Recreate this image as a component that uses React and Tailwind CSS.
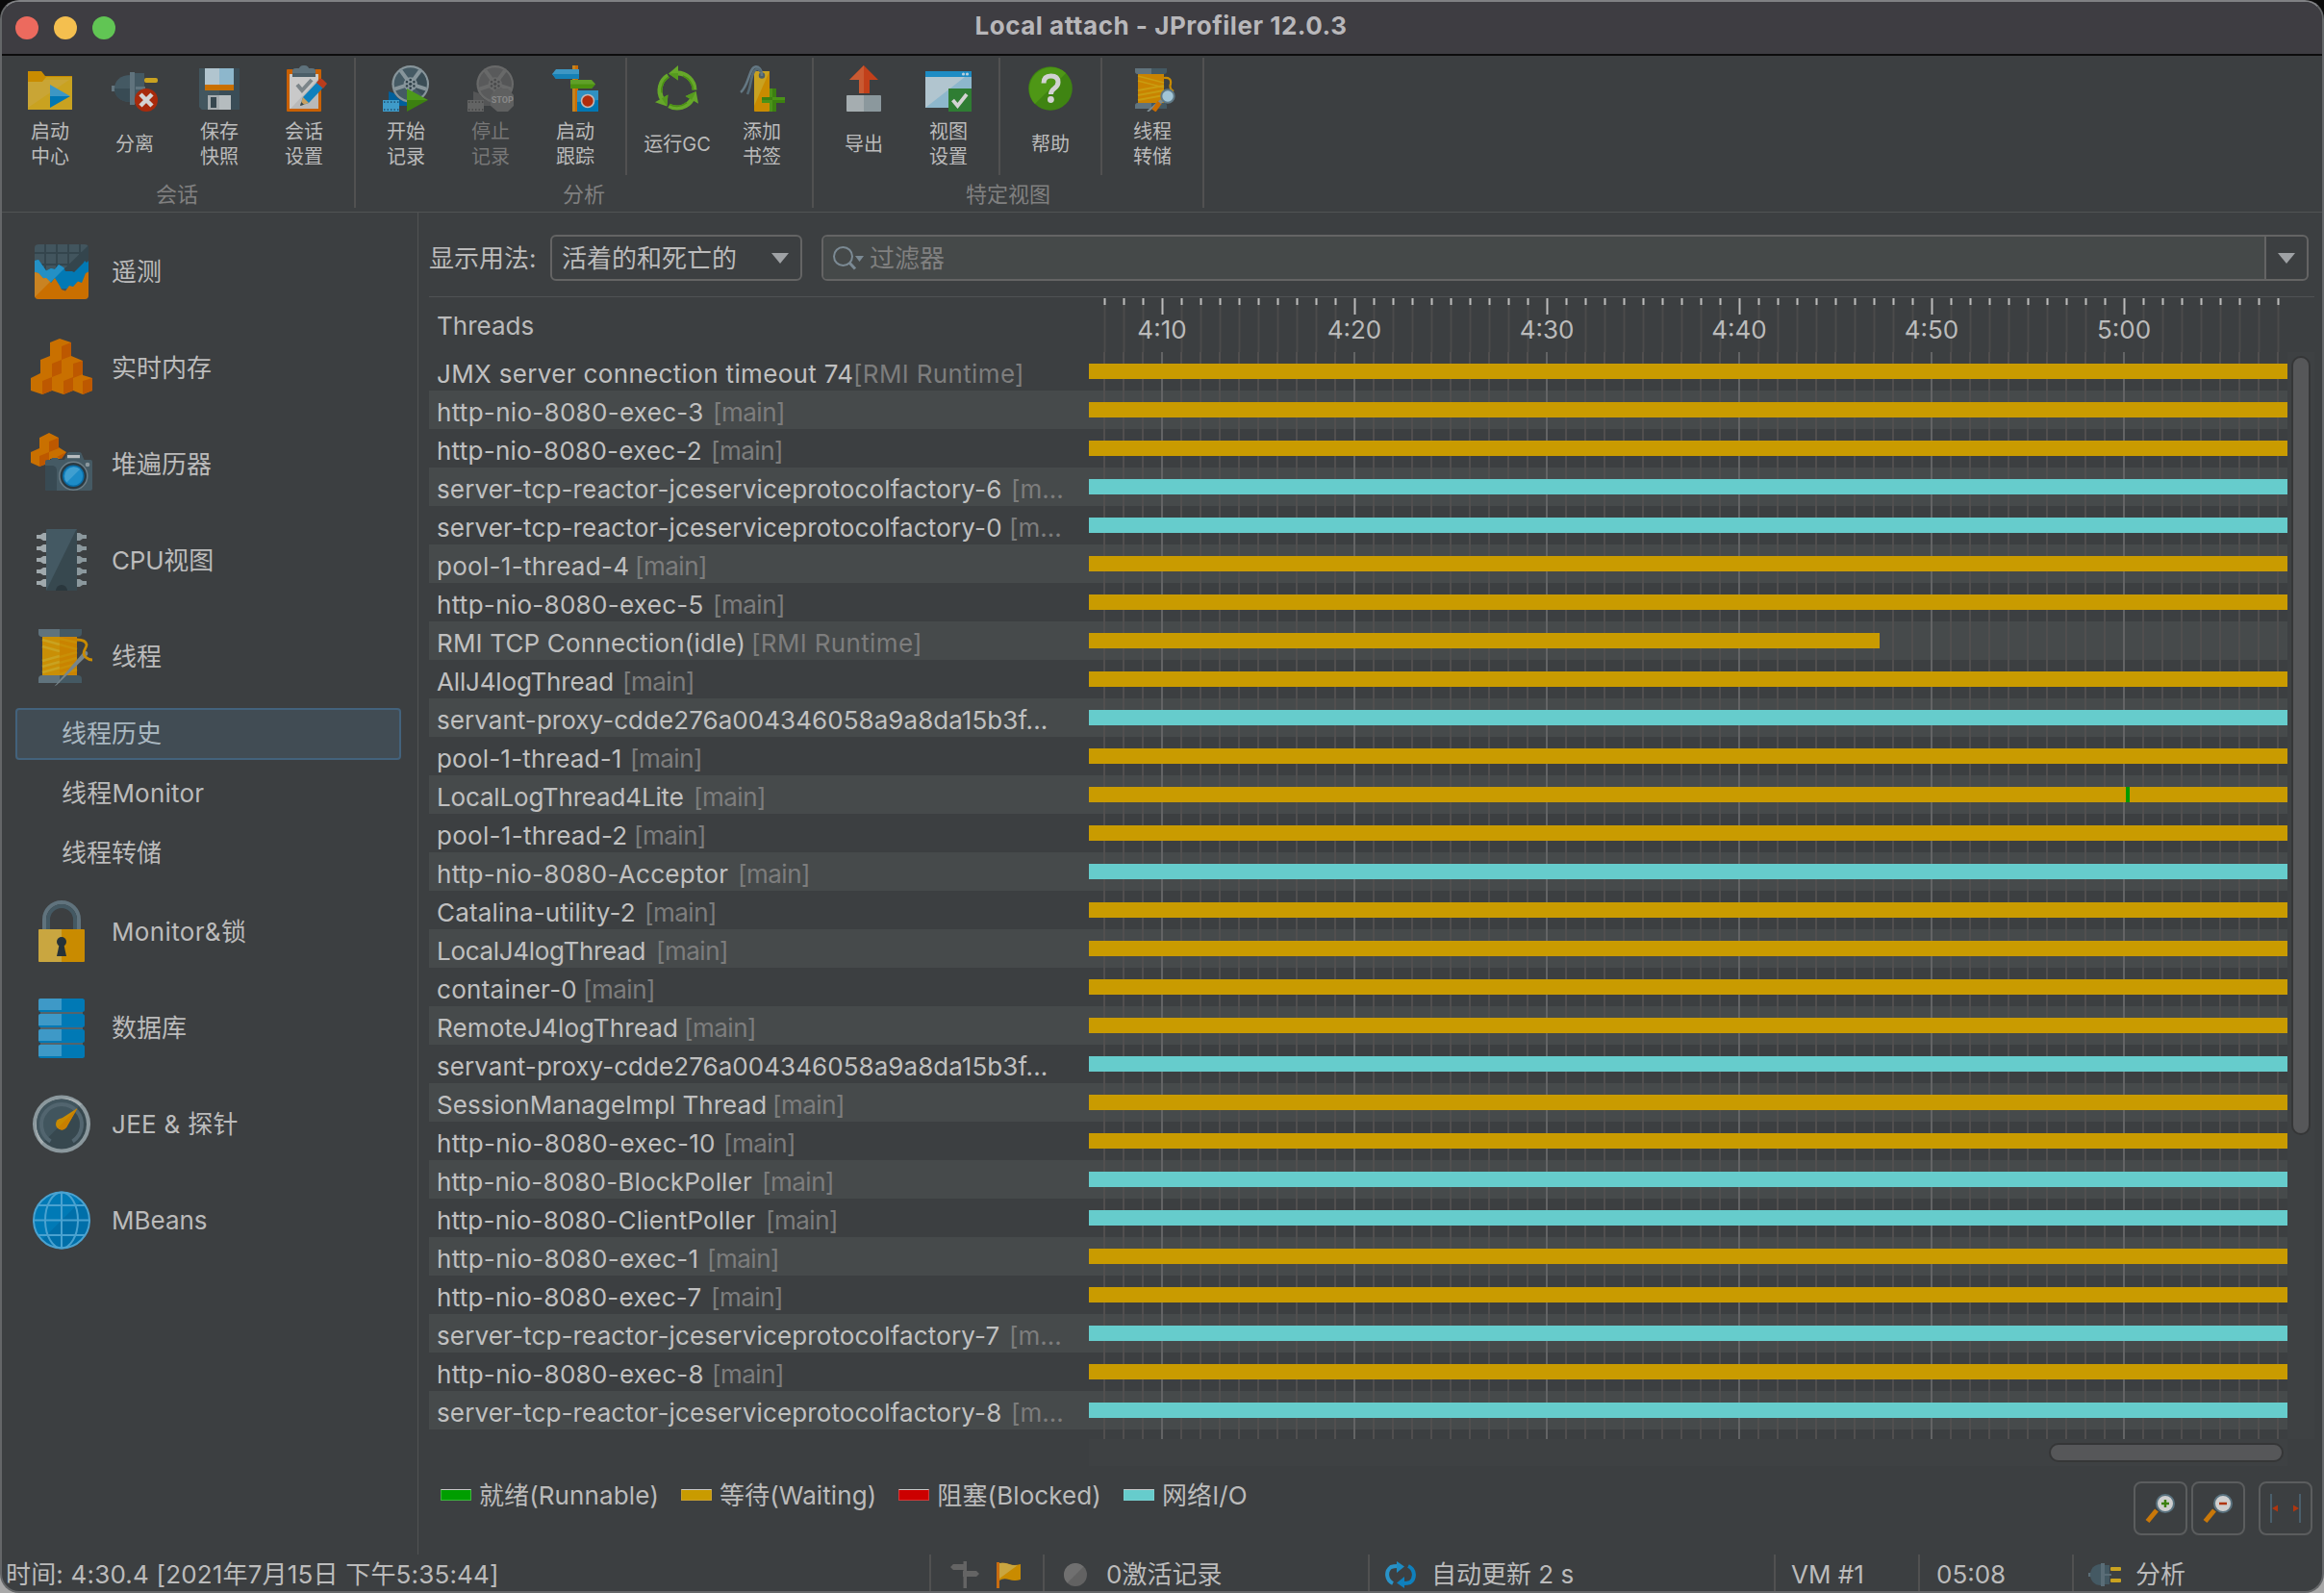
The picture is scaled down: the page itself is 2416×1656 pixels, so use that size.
import React from "react";

/* ---------- toolbar icons (48 x 48) ---------- */

const Icon48 = ({ children }) => (
  <svg width="48" height="48" viewBox="0 0 48 48" className="block shrink-0">
    {children}
  </svg>
);

const StartCenterIcon = () => (
  <Icon48>
    <path d="M1 6h14l4 5h28v35H1z" fill="#c98c00" />
    <path d="M1 17h15l4-5h27v34H1z" fill="#c9a220" />
    <path d="M1 17h15l2-2h26L1 44z" fill="#c9a535" />
    <path d="M24 20L45 32H24z" fill="#3d97c4" />
    <path d="M24 44L45 32H24z" fill="#0077b3" />
  </Icon48>
);

const DetachIcon = () => (
  <Icon48>
    <rect x="0" y="21" width="4" height="6" fill="#62747e" />
    <path d="M20 10C9 10 3 16 3 24s6 14 17 14z" fill="#445963" />
    <path d="M20 24H3c0 8 6 14 17 14z" fill="#384b54" />
    <rect x="24" y="8" width="10" height="32" fill="#445963" />
    <rect x="19" y="7" width="5" height="34" fill="#60737d" />
    <rect x="25" y="22" width="10" height="3" fill="#60737d" />
    <rect x="34" y="13" width="14" height="5" rx="2" fill="#c9a220" />
    <circle cx="36" cy="36" r="12" fill="#a82a0c" />
    <path d="M30 30l12 12M42 30L30 42" stroke="#d3d3d3" strokeWidth="4.5" />
  </Icon48>
);

const SaveIcon = () => (
  <Icon48>
    <path d="M3 3h42v43H6l-3-3z" fill="#3a4d57" />
    <path d="M3 3h21v43H6l-3-3z" fill="#42565f" />
    <rect x="9" y="3" width="15" height="17" fill="#b1c5cf" />
    <rect x="24" y="3" width="15" height="17" fill="#8db7cc" />
    <rect x="9" y="20" width="30" height="6" fill="#c97000" />
    <rect x="12" y="31" width="24" height="15" fill="#a6adb0" />
    <rect x="24" y="31" width="12" height="15" fill="#b5bcbf" />
    <rect x="15" y="33" width="6" height="11" fill="#37474f" />
  </Icon48>
);

const SessionSettingsIcon = () => (
  <Icon48>
    <rect x="6" y="4" width="36" height="44" rx="1" fill="#c96000" />
    <rect x="9" y="9" width="30" height="36" fill="#c9c9c9" />
    <path d="M39 14v31H10z" fill="#b9b9b9" />
    <path d="M12 12V6q0-3 4-3h3q1-3 5-3t5 3h3q4 0 4 3v6z" fill="#4b5e68" />
    <path d="M12 8V6q0-3 4-3h3q1-3 5-3t5 3h3q4 0 4 3v2z" fill="#5f727c" />
    <path d="M17 20l5 6 10-11" fill="none" stroke="#7c8589" strokeWidth="4" />
    <path d="M20 42l3-9 16-17 6 6-16 17z" fill="#0d80bd" />
    <path d="M20 42l3-9 6 6z" fill="#c9a060" />
    <path d="M20 42l1.300-4 2.700 2.700z" fill="#37474f" />
    <path d="M37 18l3-4q2-1 4 1l4 4-4 5z" fill="#b93c1c" />
  </Icon48>
);

const Reel = ({ rim, body, dark, hole }) => (
  <g>
    <circle cx="28.700" cy="19.300" r="19.300" fill={rim} />
    <circle cx="28.700" cy="19.300" r="17" fill={body} />
    <path d="M28.700 19.300L41 7.500A17 17 0 0 1 41 31z" fill={dark} />
    {[36, 108, 180, 252, 324].map((a) => (
      <rect key={a} x="26.700" y="2" width="4" height="13" fill={rim} transform={`rotate(${a} 28.7 19.3)`} />
    ))}
    <circle cx="28.700" cy="19.300" r="7" fill={rim} />
    <circle cx="28.700" cy="19.300" r="1.600" fill={hole} />
    {[0, 60, 120, 180, 240, 300].map((a) => (
      <circle key={a} cx="28.700" cy="15" r="1.300" fill={hole} transform={`rotate(${a} 28.7 19.3)`} />
    ))}
  </g>
);

const FilmStrip = ({ back, front, hole }) => (
  <g>
    <path d="M6 27l6 2q4 8 14 9v4H6z" fill={back} />
    <rect x="0" y="36" width="17" height="12" fill={front} />
    {[1, 4.5, 8, 11.5, 15].map((x) => (
      <g key={x} fill={hole}>
        <rect x={x} y="37.300" width="1.400" height="1.600" />
        <rect x={x} y="45.200" width="1.400" height="1.600" />
      </g>
    ))}
  </g>
);

const StartRecordingIcon = () => (
  <Icon48>
    <FilmStrip back="#005f9a" front="#3f9bc9" hole="#1f4f70" />
    <Reel rim="#87959b" body="#455a64" dark="#3a4d56" hole="#2f4049" />
    <path d="M25 24l22 12H25z" fill="#4d9a1a" />
    <path d="M25 48l22-12H25z" fill="#3c8010" />
  </Icon48>
);

const StopRecordingIcon = () => (
  <Icon48>
    <FilmStrip back="#555657" front="#636464" hole="#444" />
    <Reel rim="#686969" body="#595a5b" dark="#555657" hole="#4a4b4c" />
    <path d="M31 24h11l6 7v11l-6 6H31l-7-6V31z" fill="#5f6060" />
    <text x="36.200" y="39.300" textAnchor="middle" fontFamily="Roboto, sans-serif" fontSize="9" fontWeight="700" fill="#888888">
      STOP
    </text>
  </Icon48>
);

const TrackingIcon = () => (
  <Icon48>
    <rect x="21" y="0" width="6" height="48" fill="#c4831e" />
    <rect x="24" y="0" width="3" height="48" fill="#c96c00" />
    <path d="M0 9l4-5h24v10H4z" fill="#3d97c4" />
    <path d="M0 9l4 5h24V9z" fill="#1580b5" />
    <path d="M45 19.500L41 15H19v9h22z" fill="#60a028" />
    <path d="M45 19.500L41 24H19v-4.500z" fill="#4b9010" />
    <rect x="26" y="26" width="22" height="22" fill="#0077b3" />
    <path d="M26 26h22v10L26 38z" fill="#3091c1" />
    <circle cx="37" cy="37" r="6.500" fill="#b02c0d" stroke="#c3b8b5" strokeWidth="1.600" />
  </Icon48>
);

const RunGcIcon = () => (
  <Icon48>
    {[0, 120, 240].map((a) => (
      <g key={a} transform={`rotate(${a} 24 26)`}>
        <path d="M42 25.500A18 18 0 0 0 24 8" fill="none" stroke="#66a82a" strokeWidth="5" />
        <path d="M40.500 25.500A16.500 16.500 0 0 0 30 11" fill="none" stroke="#4a8f14" strokeWidth="1.600" />
        <path d="M25 0L15 8.500 25 15.500z" fill="#66a82a" />
        <path d="M25 8L15 8.500 25 15.500z" fill="#559a1e" />
      </g>
    ))}
  </Icon48>
);

const BookmarkIcon = () => (
  <Icon48>
    <rect x="16" y="6" width="16" height="42" rx="1" fill="#c98b00" />
    <path d="M16 6h16L16 42z" fill="#c9a220" />
    <circle cx="24" cy="10.500" r="3.200" fill="#4b5e68" />
    <path d="M24 11C24 3 20 1 17 1.500C11 2.500 10 22 2 28" fill="none" stroke="#647884" strokeWidth="2.600" />
    <path d="M23 7C21 3 18 3 16 6C12 13 13 22 9 30" fill="none" stroke="#566a75" strokeWidth="2.600" />
    <path d="M32 24h7v9h9v6h-9v9h-7v-9h-8v-6h8z" fill="#3c8010" />
    <path d="M32 24h3v24h-3v-9h-8v-3h24v-3H32z" fill="#4b9318" />
  </Icon48>
);

const ExportIcon = () => (
  <Icon48>
    <path d="M24 0L9 15h10v14h11V15h9z" fill="#c2401a" />
    <path d="M24 0L9 15h10v14h5z" fill="#c95a32" />
    <rect x="6" y="31" width="36" height="17" rx="1" fill="#8b989d" />
    <path d="M7 31h17v17H7l-1-1V32z" fill="#a5adb0" />
  </Icon48>
);

const ViewSettingsIcon = () => (
  <Icon48>
    <rect x="0" y="6" width="48" height="38" fill="#8db7cc" />
    <path d="M0 12h41L0 44z" fill="#b1c5cf" />
    <rect x="0" y="6" width="48" height="6" fill="#1d8cc4" />
    <circle cx="39.500" cy="9" r="1.600" fill="#b8cfda" />
    <circle cx="43.500" cy="9" r="1.600" fill="#b8cfda" />
    <rect x="24" y="24" width="24" height="24" fill="#2f7d33" />
    <path d="M28.500 36l5 6 9.500-12" fill="none" stroke="#d3d3d3" strokeWidth="3.800" />
  </Icon48>
);

const HelpIcon = () => (
  <Icon48>
    <circle cx="24" cy="24" r="22.800" fill="#3f8412" />
    <path d="M7.900 40.100A22.800 22.800 0 0 1 40.100 7.900z" fill="#4e9716" />
    <path d="M17 18.500q0-7.500 7.500-7.500t7.500 6.500q0 3.500-4 6.500-3.500 2.500-3.500 6" fill="none" stroke="#d2d2d2" strokeWidth="5" />
    <circle cx="24.400" cy="35.500" r="3.400" fill="#d2d2d2" />
  </Icon48>
);

const ThreadDumpIcon = () => (
  <Icon48>
    <path d="M6 3h33v3q0 3-3 3H9q-3 0-3-3z" fill="#445963" />
    <path d="M6 3h17v6H9q-3 0-3-3z" fill="#60737d" />
    <rect x="9" y="9" width="27" height="30" fill="#c98300" />
    <path d="M9 11l27 7M9 16l27 7M9 26l27-5M9 31l27-5M9 36l27-5" stroke="#c99c10" strokeWidth="1.800" />
    <path d="M6 45v-3q0-3 3-3h27q3 0 3 3v3z" fill="#445963" />
    <path d="M6 45v-3q0-3 3-3h14v6z" fill="#60737d" />
    <path d="M36 13q8-1 7 6-2 5 3 8" fill="none" stroke="#c98b00" strokeWidth="2.200" />
    <path d="M19 48L33 36" stroke="#7e8c92" strokeWidth="2" />
    <path d="M25.500 47l6-8.500" stroke="#c96c00" strokeWidth="5" />
    <path d="M32 39l4-3" stroke="#7e8c92" strokeWidth="2.500" />
    <circle cx="40" cy="32" r="6.700" fill="#a2c5d6" stroke="#5f7885" strokeWidth="2" />
  </Icon48>
);

/* ---------- sidebar icons (64 x 64) ---------- */

const Icon64 = ({ children }) => (
  <svg width="64" height="64" viewBox="0 0 64 64" className="block shrink-0">
    {children}
  </svg>
);

const TelemetryIcon = () => (
  <Icon64>
    <rect x="4" y="4" width="56" height="57" rx="4" fill="#42555e" />
    <path d="M60 5v35H24z" fill="#34454d" />
    <path d="M15 4v30M27 4v30M39 4v30M51 4v30M4 13h56M4 25h56" stroke="#34454d" strokeWidth="2" />
    <path
      d="M4 21l4-1 8 11.500 5-2.500 4 1 4-5 5 3 2 4h7l2 1 10-10 1-2 2 2 2-2V50H4z"
      fill="#0279b4"
    />
    <path d="M4 21l4-1 8 11.500 5-2.500 4 1 4-5 5 3 1 1-16 16H4z" fill="#2490c5" />
    <path
      d="M4 33l4 1 5 5.500 3-.500 5 5 4-5 5 8 2 4 4 1.500 4-5.500 4 1 5-5.500 4 1.500 4-10 3-1.500V57q0 4-4 4H8q-4 0-4-4z"
      fill="#c96f00"
    />
    <path d="M4 33l4 1 5 5.500 3-.500 4 4-16 16z" fill="#c98322" />
  </Icon64>
);

const LiveMemoryIcon = () => (
  <Icon64>
    <path
      d="M20 6L30 2 42 6V20L54 25V40L64 43V56L54 60 44 56 34 60 22 56 12 60 0 56V43L10 38V24L20 20Z"
      fill="#c97000"
    />
    <path
      d="M32 10L42 6V20L32 24zM22 28L32 24V38L22 42zM44 28L54 25V39L44 43zM12 46L22 42V56L12 60zM34 46L44 42V56L34 60zM54 46L64 43V56L54 60z"
      fill="#bd5800"
    />
  </Icon64>
);

const HeapWalkerIcon = () => (
  <Icon64>
    <path d="M9 5L19 0 29 5V15L37 20 30 27 20 27V31L9 35 0 31V20L9 16Z" fill="#c97000" />
    <path d="M19 9L29 5V16L19 20zM9 24L19 20V31L9 35zM27 25L37 20 32 27z" fill="#bd5800" />
    <path d="M17 28h4l1-2h6l1 2h6l3-7q.500-1 2-1h10q2 0 2.500 1l3 7H62q2 0 2 2v28q0 2-2 2H17q-2 0-2-2V30q0-2 2-2z" fill="#455a64" />
    <path d="M15 34h8q4 1 4 5v21H17q-2 0-2-2z" fill="#384a53" />
    <rect x="38" y="23" width="13" height="3.200" fill="#b7bcbf" />
    <circle cx="59" cy="33" r="2.300" fill="#8a979d" />
    <circle cx="44.300" cy="44.700" r="14.500" fill="#2a3a42" stroke="#6d7e87" strokeWidth="1.500" />
    <circle cx="44.300" cy="44.700" r="11.300" fill="#0a6ea8" />
    <circle cx="44.300" cy="44.700" r="9.800" fill="#1d8cc7" />
    <path d="M37.400 51.600A9.800 9.800 0 0 1 51.200 37.800z" fill="#3f9fd0" />
  </Icon64>
);

const CpuIcon = () => (
  <Icon64>
    {[8, 20, 32, 44, 56].map((y) => (
      <g key={y} transform={`translate(0 ${y})`}>
        <path d="M6-2h4l3-2h3v8h-3l-3-2H6z" fill="#a0a9ad" />
        <path d="M58-2h-4l-3-2h-3v8h3l3-2h4z" fill="#8b989d" />
      </g>
    ))}
    <rect x="16" y="0" width="32" height="64" rx="1" fill="#445963" />
    <path d="M47 1h1v63H16z" fill="#37484f" />
    <path d="M26 64a6 6 0 0 1 12 0z" fill="#2a373d" />
  </Icon64>
);

const ThreadsIcon = () => (
  <Icon64>
    <path d="M8 4h45v4q0 4-4 4H12q-4 0-4-4z" fill="#445963" />
    <path d="M8 4h22v8H12q-4 0-4-4z" fill="#60737d" />
    <rect x="12" y="12" width="36" height="40" fill="#c98300" />
    <rect x="12" y="12" width="18" height="40" fill="#c98f06" />
    <g fill="none" strokeWidth="2.600">
      <path d="M12 15l18 5M12 22l18 5M12 37l18-5M12 43l18-5M12 49l18-5" stroke="#c9a220" />
      <path d="M30 14l18 4M30 20l18 5M30 33l18-5M30 39l18-5M30 45l18-5M30 51l18-5" stroke="#c98f06" />
    </g>
    <path d="M8 60v-4q0-4 4-4h37q4 0 4 4v4z" fill="#445963" />
    <path d="M8 60v-4q0-4 4-4h18v8z" fill="#60737d" />
    <path d="M24.500 63.500L53 30q3-4 5-3t1 4L27 62z" fill="#77858b" />
    <path d="M48 15q9 0 10 5c0 4-3 5-3 9 0 3 4 7 9 7" fill="none" stroke="#c98b00" strokeWidth="2.800" />
  </Icon64>
);

const LockIcon = () => (
  <Icon64>
    <path d="M14 31V20a18 18 0 0 1 36 0v11" fill="none" stroke="#60737d" strokeWidth="4" />
    <path d="M18 31V20a14 14 0 0 1 28 0v11" fill="none" stroke="#445963" strokeWidth="4" />
    <rect x="8" y="30" width="48" height="34" rx="1" fill="#c98b00" />
    <path d="M9 30h23v34H9l-1-1V31z" fill="#c9a640" />
    <circle cx="32" cy="43" r="5" fill="#263238" />
    <path d="M30 44h4l3 14H27z" fill="#263238" />
  </Icon64>
);

const DatabaseIcon = () => (
  <Icon64>
    <rect x="10" y="10" width="44" height="50" fill="#54646c" />
    {[2, 18, 34, 50].map((y) => (
      <g key={y}>
        <rect x="8" y={y} width="48" height="14" rx="2.500" fill="#0079b5" />
        <path transform={`translate(0 ${y})`} d="M10 0h22v12H8V2q0-2 2-2z" fill="#3e99c7" />
      </g>
    ))}
  </Icon64>
);

const GaugeIcon = () => (
  <Icon64>
    <circle cx="32" cy="32.500" r="30" fill="#8b989d" />
    <path d="M11 53.500A30 30 0 0 1 53 11.500z" fill="#a4adb0" />
    <circle cx="32" cy="32.500" r="26" fill="#37484f" />
    <path d="M13.600 50.900A26 26 0 0 1 50.400 14.100z" fill="#41555e" />
    <path d="M20.500 50.500A21 21 0 1 1 43.500 50.500" fill="none" stroke="#52656f" strokeWidth="4" />
    <path d="M29 28.500L48.500 16 37 36z" fill="#c98b00" />
    <circle cx="32" cy="32.500" r="6" fill="#c98b00" />
    <path d="M28 36.500L48.500 16 37 36q-4 5-9 .500z" fill="#c97f00" />
  </Icon64>
);

const GlobeIcon = () => (
  <Icon64>
    <circle cx="32" cy="32.500" r="29" fill="#006fa9" />
    <path d="M11.500 53A29 29 0 0 1 52.500 12z" fill="#007ab6" />
    <g fill="none" stroke="#4aa2d0" strokeWidth="2">
      <circle cx="32" cy="32.500" r="29" />
      <ellipse cx="32" cy="32.500" rx="17" ry="29" />
      <path d="M32 3v59M3 32.500h58M7 17h50M7 48h50" />
    </g>
  </Icon64>
);

/* ---------- data ---------- */

const toolbarGroups = [
  {
    label: "会话",
    sections: [
      [
        { lines: ["启动", "中心"], Icon: StartCenterIcon },
        { lines: ["分离"], Icon: DetachIcon },
        { lines: ["保存", "快照"], Icon: SaveIcon },
        { lines: ["会话", "设置"], Icon: SessionSettingsIcon },
      ],
    ],
  },
  {
    label: "分析",
    sections: [
      [
        { lines: ["开始", "记录"], Icon: StartRecordingIcon },
        { lines: ["停止", "记录"], Icon: StopRecordingIcon, disabled: true },
        { lines: ["启动", "跟踪"], Icon: TrackingIcon },
      ],
      [
        { lines: ["运行GC"], Icon: RunGcIcon },
        { lines: ["添加", "书签"], Icon: BookmarkIcon },
      ],
    ],
  },
  {
    label: "特定视图",
    sections: [
      [
        { lines: ["导出"], Icon: ExportIcon },
        { lines: ["视图", "设置"], Icon: ViewSettingsIcon },
      ],
      [{ lines: ["帮助"], Icon: HelpIcon }],
      [{ lines: ["线程", "转储"], Icon: ThreadDumpIcon }],
    ],
  },
];

const navTop = [
  ["遥测", TelemetryIcon],
  ["实时内存", LiveMemoryIcon],
  ["堆遍历器", HeapWalkerIcon],
  ["CPU视图", CpuIcon, "tracking-[-0.2px]"],
  ["线程", ThreadsIcon],
];

const navBottom = [
  ["Monitor&锁", LockIcon, "tracking-[0.35px]"],
  ["数据库", DatabaseIcon],
  ["JEE & 探针", GaugeIcon, "tracking-[0.3px]"],
  ["MBeans", GlobeIcon],
];

const W = "waiting";
const N = "net";
const MAIN = "[main]";
const RMI = "[RMI Runtime]";

/* name, letter spacing, group, width reserved for the name, state, bar width, runnable offset */
const threads = [
  ["JMX server connection timeout 74", 0.34, RMI, 433, W],
  ["http-nio-8080-exec-3", 0.3, MAIN, 287, W],
  ["http-nio-8080-exec-2", 0.25, MAIN, 285, W],
  ["server-tcp-reactor-jceserviceprotocolfactory-6", 0.14, "[m...", 597, N],
  ["server-tcp-reactor-jceserviceprotocolfactory-0", 0.14, "[m...", 595, N],
  ["pool-1-thread-4", 0.3, MAIN, 206, W],
  ["http-nio-8080-exec-5", 0.3, MAIN, 287, W],
  ["RMI TCP Connection(idle)", 0.18, RMI, 327, W, 822],
  ["AllJ4logThread", -0.16, MAIN, 193, W],
  ["servant-proxy-cdde276a004346058a9a8da15b3f...", 0.05, "", 640, N],
  ["pool-1-thread-1", 0.2, MAIN, 201, W],
  ["LocalLogThread4Lite", -0.17, MAIN, 267, W, 1246, 1078],
  ["pool-1-thread-2", 0.3, MAIN, 205, W],
  ["http-nio-8080-Acceptor", 0.28, MAIN, 313, N],
  ["Catalina-utility-2", 0.17, MAIN, 216, W],
  ["LocalJ4logThread", -0.3, MAIN, 228, W],
  ["container-0", 0.28, MAIN, 152, W],
  ["RemoteJ4logThread", 0.13, MAIN, 257, W],
  ["servant-proxy-cdde276a004346058a9a8da15b3f...", 0.05, "", 640, N],
  ["SessionManageImpl Thread", 0.03, MAIN, 349, W],
  ["http-nio-8080-exec-10", 0.33, MAIN, 298, W],
  ["http-nio-8080-BlockPoller", 0.18, MAIN, 338, N],
  ["http-nio-8080-ClientPoller", 0.2, MAIN, 342, N],
  ["http-nio-8080-exec-1", 0.3, MAIN, 281, W],
  ["http-nio-8080-exec-7", 0.27, MAIN, 285, W],
  ["server-tcp-reactor-jceserviceprotocolfactory-7", 0.14, "[m...", 595, N],
  ["http-nio-8080-exec-8", 0.3, MAIN, 286, W],
  ["server-tcp-reactor-jceserviceprotocolfactory-8", 0.14, "[m...", 597, N],
];

const groupTracking = { [MAIN]: "tracking-[-0.5px]", [RMI]: "tracking-[0.35px]" };

const ticks = Array.from({ length: 62 }, (_, i) => ({ x: 15 + i * 20, major: i % 10 === 3 }));
const tickLabels = ["4:10", "4:20", "4:30", "4:40", "4:50", "5:00"];

/* ---------- pieces ---------- */

const ToolbarButton = ({ lines, Icon, disabled }) => (
  <div className="flex w-[88px] flex-col items-center pt-[10px]">
    <Icon />
    <div
      className={`mt-[7px] flex h-[54px] flex-col items-center justify-center whitespace-nowrap text-[20px] leading-[26px] ${
        disabled ? "text-[#777777]" : "text-[#bbbbbb]"
      }`}
    >
      {lines.map((l) => (
        <span key={l}>{l}</span>
      ))}
    </div>
  </div>
);

const ToolbarGroup = ({ label, sections }) => (
  <div className="flex">
    <div className="flex flex-col">
      <div className="flex h-[124px]">
        {sections.map((items, i) => (
          <React.Fragment key={i}>
            {i > 0 && <div className="mt-[2px] w-[2px] bg-[#515151]" />}
            <div className="flex px-[8px]">
              {items.map((it) => (
                <ToolbarButton key={it.lines.join("")} {...it} />
              ))}
            </div>
          </React.Fragment>
        ))}
      </div>
      <div className="pt-[5px] text-center text-[22px] leading-[30px] text-[#808080]">{label}</div>
    </div>
    <div className="mt-[2px] h-[156px] w-[2px] bg-[#515151]" />
  </div>
);

const NavItem = ({ label, Icon, tracking = "" }) => (
  <div className="flex h-[100px] items-center pl-[30px]">
    <Icon />
    <span className={`ml-[20px] pt-[2px] ${tracking}`}>{label}</span>
  </div>
);

const GridLines = () => (
  <svg width="1246" height="1130" className="absolute left-[686px] top-0">
    {ticks.map((t) => (
      <rect key={t.x} x={t.x} y="0" width="2" height="1130" fill={t.major ? "#636465" : "#514f4f"} />
    ))}
  </svg>
);

const TimeAxis = () => (
  <svg width="1246" height="57" className="block">
    {ticks.map((t) => (
      <g key={t.x}>
        {!t.major && <rect x={t.x + 0.5} y="1" width="2" height="56" fill="#4b4b4b" />}
        <rect x={t.x + 0.5} y="1" width="2" height={t.major ? 17 : 7} fill="#bbbbbb" />
      </g>
    ))}
    {tickLabels.map((l, i) => (
      <text key={l} x={76 + i * 200} y="43" textAnchor="middle" fontSize="26" fill="#bbbbbb">
        {l}
      </text>
    ))}
  </svg>
);

const ThreadRow = ({ row, striped }) => {
  const [name, spacing, group, width, state, barWidth = 1246, marker] = row;
  return (
    <div className={`flex h-[40px] w-[1932px] ${striped ? "bg-[#464a4b]" : ""}`}>
      <div className="flex w-[686px] shrink-0 whitespace-pre pl-[8px] pt-[5px] leading-[36px]">
        <span className="shrink-0 text-[#c0c0c0]" style={{ width, letterSpacing: spacing }}>
          {name}
        </span>
        <span className={`text-[#7d7d7d] ${groupTracking[group] ?? ""}`}>{group}</span>
      </div>
      <div className="relative z-10 pt-[12px]">
        <div
          className={`flex h-[16px] ${state === W ? "bg-[#c99b00]" : "bg-[#66cccc]"}`}
          style={{ width: barWidth }}
        >
          {marker && <div className="h-full w-[4px] bg-[#009900]" style={{ marginLeft: marker }} />}
        </div>
      </div>
    </div>
  );
};

const Legend = ({ color, label, edge }) => (
  <div className="flex items-center">
    <div className={`h-[12px] w-[32px] border ${color} ${edge}`} />
    <span className="ml-[8px] pt-[2px] tracking-[0.1px]">{label}</span>
  </div>
);

const SquareButton = ({ children, className = "" }) => (
  <div className={`flex h-[56px] w-[56px] items-center justify-center rounded-[8px] border-2 border-[#5b5d5e] ${className}`}>
    {children}
  </div>
);

const ZoomGlyph = ({ plus }) => (
  <svg width="32" height="32" viewBox="0 0 32 32">
    <path d="M2.500 29.500L12 18" stroke="#c9780a" strokeWidth="5" />
    <circle cx="21" cy="11" r="9" fill="#cfcfcf" stroke="#5a7380" strokeWidth="2" />
    <path d="M17 11h8" stroke={plus ? "#3c8010" : "#b0350f"} strokeWidth="2.500" />
    {plus && <path d="M21 7v8" stroke="#3c8010" strokeWidth="2.500" />}
  </svg>
);

const Divider = () => <div className="w-[2px] self-stretch bg-[#515151]" />;

export default function App() {
  return (
    <div className="h-[1656px] w-[2416px] overflow-hidden bg-[linear-gradient(to_bottom,#0a0a0a_50%,#a8a8a8_50%)] font-['Inter','Noto_Sans_CJK_SC',sans-serif] text-[26px] leading-[36px] text-[#bbbbbb]">
      <div className="flex h-full w-full flex-col overflow-hidden rounded-[20px] border-2 border-[#646668] border-t-[#808184] bg-[#3c3f41]">
        {/* title bar */}
        <div className="flex h-[54px] shrink-0 items-center bg-[#3e3d42]">
          <div className="flex w-[200px] gap-[16px] pl-[14px]">
            <div className="h-[24px] w-[24px] rounded-full bg-[#ec6a5e]" />
            <div className="h-[24px] w-[24px] rounded-full bg-[#f4bf4f]" />
            <div className="h-[24px] w-[24px] rounded-full bg-[#61c554]" />
          </div>
          <div className="flex-1 pb-[4px] pr-[202px] text-center font-bold tracking-[0.52px] text-[#b8b7ba]">
            Local attach - JProfiler 12.0.3
          </div>
        </div>
        <div className="h-[2px] shrink-0 bg-[#0c0c0c]" />

        {/* toolbar */}
        <div className="flex h-[163px] shrink-0 border-b border-[#515354]">
          <div className="-ml-[2px] flex">
            {toolbarGroups.map((g) => (
              <ToolbarGroup key={g.label} {...g} />
            ))}
          </div>
        </div>

        <div className="flex min-h-0 flex-1">
          {/* navigation */}
          <div className="w-[432px] shrink-0 pt-[11px]">
            {navTop.map(([label, Icon, tracking]) => (
              <NavItem key={label} label={label} Icon={Icon} tracking={tracking} />
            ))}
            <div className="flex h-[186px] flex-col gap-[8px] pt-[4px] pl-[14px]">
              <div className="flex h-[54px] w-[401px] items-center rounded-[4px] border-2 border-[#43627c] bg-[#414c54] pl-[46px] text-[#a9b7c0]">
                线程历史
              </div>
              <div className="flex h-[54px] items-center pl-[48px] tracking-[0.2px]">线程Monitor</div>
              <div className="flex h-[54px] items-center pl-[48px]">线程转储</div>
            </div>
            {navBottom.map(([label, Icon, tracking]) => (
              <NavItem key={label} label={label} Icon={Icon} tracking={tracking} />
            ))}
          </div>

          {/* content */}
          <div className="flex min-w-0 flex-1 flex-col border-l border-[#515354] pl-[11px]">
            <div className="flex h-[87px] shrink-0 pt-[23px]">
              <div className="flex h-[48px] w-[126px] items-center pt-[2px]">显示用法:</div>
              <div className="flex h-[48px] w-[262px] items-center rounded-[6px] border-2 border-[#646464] pl-[10px]">
                <span className="flex-1 pt-[2px]">活着的和死亡的</span>
                <svg width="18" height="11" className="mr-[12px]">
                  <path d="M0 0h18L9 11z" fill="#9fa2a5" />
                </svg>
              </div>
              <div className="ml-[20px] flex h-[48px] w-[1546px] overflow-hidden rounded-[6px] border-2 border-[#646464]">
                <div className="flex w-[1498px] items-center bg-[#454949] pl-[10px] text-[#808080]">
                  <svg width="34" height="26" viewBox="0 0 34 26">
                    <circle cx="10.500" cy="11.500" r="9.500" fill="none" stroke="#7b8a94" strokeWidth="2" />
                    <path d="M17 18l6 6.500" stroke="#7b8a94" strokeWidth="3" />
                    <path d="M23 11h9l-4.500 6z" fill="#7b8a94" />
                  </svg>
                  <span className="ml-[4px] pt-[2px]">过滤器</span>
                </div>
                <div className="flex flex-1 items-center justify-center border-l-2 border-[#646464]">
                  <svg width="18" height="11">
                    <path d="M0 0h18L9 11z" fill="#9fa2a5" />
                  </svg>
                </div>
              </div>
            </div>

            {/* header */}
            <div className="flex h-[58px] w-[1960px] shrink-0 border-t border-[#505254]">
              <div className="w-[686px] pl-[8px] pt-[12px]">Threads</div>
              <TimeAxis />
            </div>

            {/* thread rows */}
            <div className="flex h-[1130px] shrink-0">
              <div className="relative w-[1932px]">
                {threads.map((row, i) => (
                  <ThreadRow key={i} row={row} striped={i % 2 === 1} />
                ))}
                <GridLines />
              </div>
              <div className="w-[28px] bg-[#3e4143] pl-[4px] pt-[4px]">
                <div className="h-[810px] w-[20px] rounded-full border-2 border-[#353637] bg-[#565759]" />
              </div>
            </div>

            <div className="ml-[686px] flex h-[28px] w-[1246px] shrink-0 justify-end bg-[#3e4143] pr-[4px] pt-[4px]">
              <div className="h-[20px] w-[244px] rounded-full border-2 border-[#353637] bg-[#565759]" />
            </div>

            {/* legend and zoom buttons */}
            <div className="flex h-[92px] shrink-0">
              <div className="flex h-[60px] w-[1772px] items-center gap-[23px] pl-[12px]">
                <Legend color="bg-[#009e00]" edge="border-[#3db33d] border-t-[#c8c8c8]" label="就绪(Runnable)" />
                <Legend color="bg-[#c99b00]" edge="border-[#c9a030] border-t-[#c8c8c8]" label="等待(Waiting)" />
                <Legend color="bg-[#cc0000]" edge="border-[#d03a3a] border-t-[#c8c8c8]" label="阻塞(Blocked)" />
                <Legend color="bg-[#66cccc]" edge="border-[#76d0d0] border-t-[#c8c8c8]" label="网络I/O" />
              </div>
              <div className="flex pt-[16px]">
                <SquareButton>
                  <ZoomGlyph plus />
                </SquareButton>
                <SquareButton className="ml-[4px]">
                  <ZoomGlyph />
                </SquareButton>
                <SquareButton className="ml-[14px]">
                  <svg width="32" height="30" viewBox="0 0 32 30">
                    <path d="M1 0v30M31 0v30" stroke="#4f6b7b" strokeWidth="1.500" />
                    <path d="M2 15l6-3.500v7zM30 15l-6-3.500v7z" fill="#b0350f" />
                  </svg>
                </SquareButton>
              </div>
            </div>
          </div>
        </div>

        {/* status bar */}
        <div className="flex h-[38px] shrink-0 items-center whitespace-nowrap pl-[4px]">
          <div className="w-[960px] pt-[4px] tracking-[0.18px]">时间: 4:30.4 [2021年7月15日 下午5:35:44]</div>
          <Divider />
          <div className="flex w-[116px] items-center pl-[20px] pt-[3px]">
            <svg width="30" height="28" viewBox="0 0 30 28">
              <rect x="13.500" y="0" width="3.500" height="28" fill="#646464" />
              <path d="M0 6l3-3h14v6H3zM30 13l-3-3H13v6h14z" fill="#646464" />
            </svg>
            <svg width="25" height="28" viewBox="0 0 25 28" className="ml-[18px]">
              <rect x="0" y="1" width="3" height="27" fill="#c96c10" />
              <path d="M3 2q5-1 10 1t12 0v16q-6 2-12 0t-10 1z" fill="#c98b00" />
              <path d="M3 2q5-1 10 1 5 2 9 1L3 18z" fill="#c9a640" />
            </svg>
          </div>
          <Divider />
          <div className="flex w-[336px] items-center pl-[20px] pt-[4px]">
            <svg width="24" height="24" viewBox="0 0 24 24">
              <circle cx="12" cy="12" r="12" fill="#626262" />
              <path d="M3.500 20.500A12 12 0 0 1 20.500 3.500z" fill="#707070" />
            </svg>
            <span className="ml-[20px]">0激活记录</span>
          </div>
          <Divider />
          <div className="flex w-[420px] items-center pl-[16px] pt-[4px]">
            <svg width="32" height="28" viewBox="0 0 32 28">
              <g fill="none" strokeWidth="4">
                <path d="M8 23A10 10 0 0 1 6 6q3-1 7-1" stroke="#2a93c8" />
                <path d="M24 5a10 10 0 0 1 2 17q-3 1-7 1" stroke="#0f80bd" />
              </g>
              <path d="M12 0l8 5.500-8 6.500z" fill="#1d8cc4" />
              <path d="M20 28l-8-5.500 8-6.500z" fill="#0f80bd" />
            </svg>
            <span className="ml-[16px]">自动更新 2 s</span>
          </div>
          <Divider />
          <div className="w-[148px] pl-[16px] pt-[4px]">VM #1</div>
          <Divider />
          <div className="w-[158px] pl-[17px] pt-[4px]">05:08</div>
          <Divider />
          <div className="flex items-center pl-[15px] pt-[4px]">
            <svg width="34" height="24" viewBox="0 0 34 24">
              <rect x="0" y="10" width="4" height="4" fill="#5a6d77" />
              <path d="M13 1C6 1 2 6 2 12s4 11 11 11z" fill="#445963" />
              <rect x="17" y="2" width="5" height="20" fill="#445963" />
              <rect x="13" y="0" width="4" height="24" fill="#5a6d77" />
              <rect x="17" y="11" width="7" height="2" fill="#5a6d77" />
              <rect x="23" y="4" width="11" height="4" rx="1" fill="#c9a220" />
              <rect x="23" y="16" width="11" height="4" rx="1" fill="#c9a220" />
            </svg>
            <span className="ml-[15px]">分析</span>
          </div>
        </div>
      </div>
    </div>
  );
}
